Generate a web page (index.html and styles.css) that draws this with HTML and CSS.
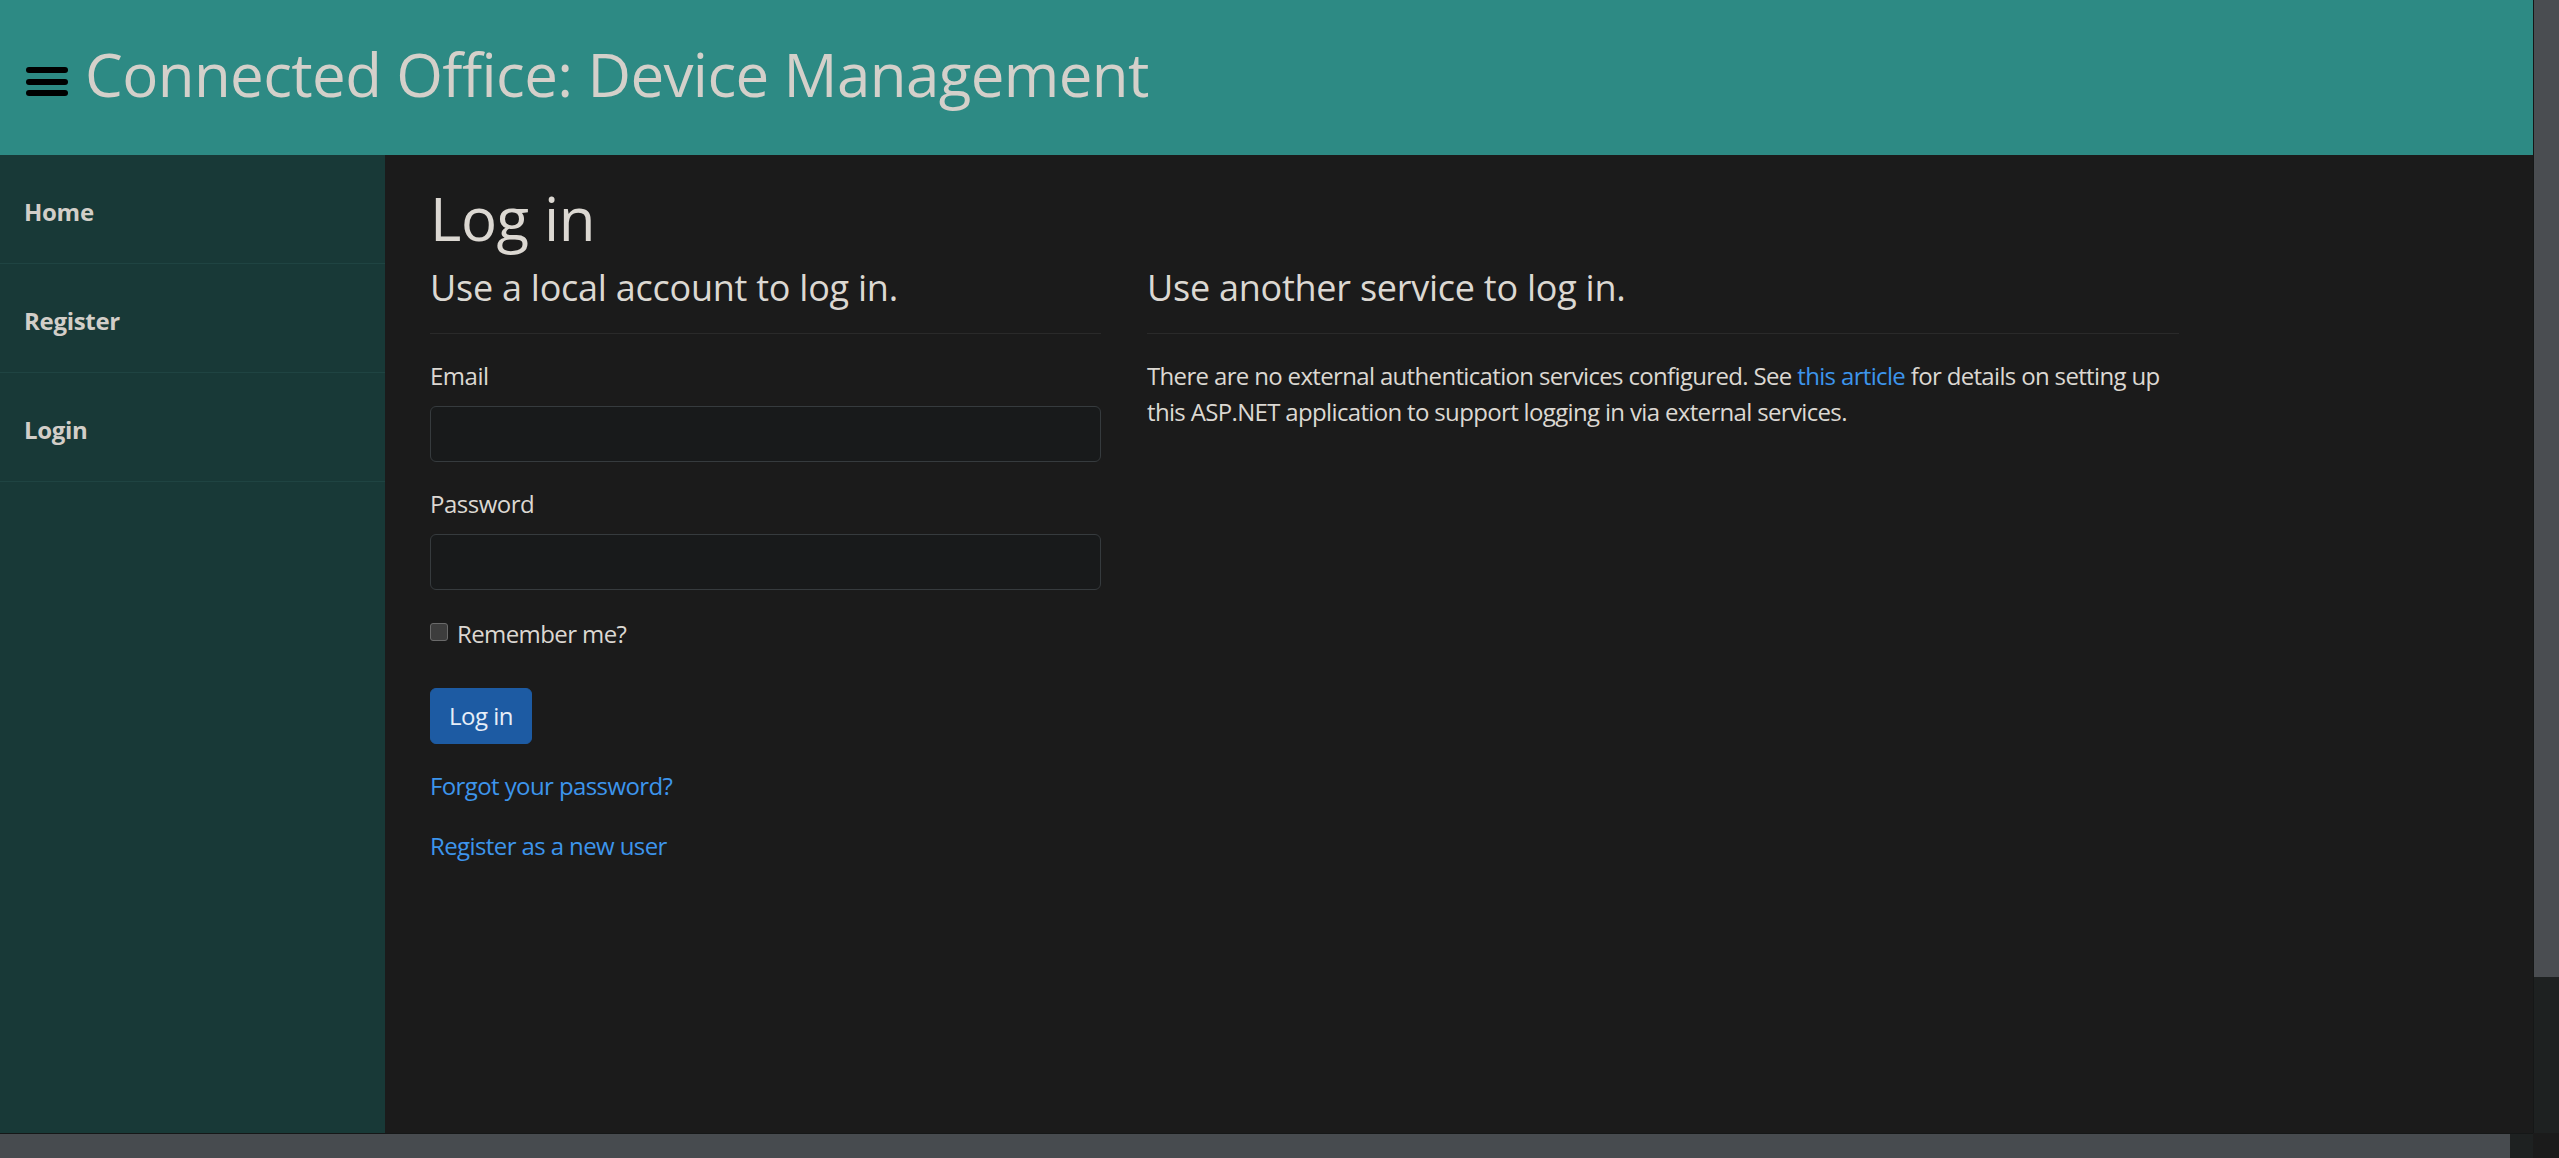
FILE: index.html
```html
<!DOCTYPE html>
<html lang="en">
<head>
<meta charset="utf-8">
<title>Log in - Connected Office: Device Management</title>
<link rel="stylesheet" href="styles.css">
</head>
<body>
<div class="viewport">
  <div class="page">
    <header class="topbar">
      <button class="menu-btn" type="button" aria-label="Toggle menu">
        <svg width="42" height="29" viewBox="0 0 42 29" aria-hidden="true">
          <line x1="3" y1="3" x2="39" y2="3" stroke="#000" stroke-width="6" stroke-linecap="round"/>
          <line x1="3" y1="15" x2="39" y2="15" stroke="#000" stroke-width="6" stroke-linecap="round"/>
          <line x1="3" y1="26" x2="39" y2="26" stroke="#000" stroke-width="6" stroke-linecap="round"/>
        </svg>
      </button>
      <span class="brand">Connected Office: Device Management</span>
    </header>
    <div class="layout">
      <nav class="sidebar">
        <a class="nav-item" href="#">Home</a>
        <a class="nav-item" href="#">Register</a>
        <a class="nav-item" href="#">Login</a>
      </nav>
      <main class="content">
        <h1 class="page-title">Log in</h1>
        <div class="row">
          <section class="col col-local">
            <form>
              <h4 class="section-title">Use a local account to log in.</h4>
              <hr class="divider">
              <div class="form-group">
                <label class="field-label" for="email">Email</label>
                <input class="form-control" id="email" type="email">
              </div>
              <div class="form-group">
                <label class="field-label" for="password">Password</label>
                <input class="form-control" id="password" type="password">
              </div>
              <div class="form-group">
                <label class="check-label"><input class="check" type="checkbox"><span>Remember me?</span></label>
              </div>
              <div class="form-group">
                <button class="btn-primary" type="button">Log in</button>
              </div>
              <div class="form-group">
                <p class="link-line"><a class="link" href="#">Forgot your password?</a></p>
                <p class="link-line"><a class="link" href="#">Register as a new user</a></p>
              </div>
            </form>
          </section>
          <section class="col col-external">
            <h4 class="section-title">Use another service to log in.</h4>
            <hr class="divider">
            <p class="info"><span>There are no external authentication services configured. See </span><a class="link" href="#">this article</a><span> for details on setting up</span><br><span>this ASP.NET application to support logging in via external services.</span></p>
          </section>
        </div>
      </main>
    </div>
  </div>
  <div class="vscroll"><div class="vthumb"></div></div>
  <div class="hscroll"><div class="hthumb"></div></div>
  <div class="corner"></div>
</div>
</body>
</html>
```
FILE: styles.css
```css
html, body {
  margin: 0;
  padding: 0;
  height: 100%;
  overflow: hidden;
}

body {
  font-family: "Open Sans", "Noto Sans", "Liberation Sans", sans-serif;
  font-size: 24px;
  line-height: 36px;
  color: #dcd8d2;
  background: #1b1b1b;
}

.viewport {
  display: grid;
  grid-template-columns: 1fr 26px;
  grid-template-rows: 1fr 25px;
  width: 100vw;
  height: 100vh;
}

.page {
  overflow: hidden;
  display: flex;
  flex-direction: column;
  background: #1b1b1b;
  min-width: 0;
  min-height: 0;
}

/* header */
.topbar {
  flex: none;
  height: 155px;
  box-sizing: border-box;
  padding: 38px 0 0 26px;
  display: flex;
  align-items: flex-start;
  background: #2d8a84;
}

.menu-btn {
  border: 0;
  padding: 0;
  margin: 29px 17px 0 0;
  background: transparent;
  display: block;
  line-height: 0;
}

.brand {
  font-size: 60px;
  line-height: 72px;
  font-weight: 500;
  color: #d4d0ca;
  letter-spacing: -0.6px;
  white-space: nowrap;
}

/* layout */
.layout {
  flex: 1;
  display: flex;
  min-height: 0;
}

.sidebar {
  flex: none;
  width: 385px;
  background: #183937;
  display: flex;
  flex-direction: column;
}

.nav-item {
  display: block;
  height: 109px;
  box-sizing: border-box;
  padding: 39px 24px 0;
  border-bottom: 1px solid #1f4442;
  font-weight: 700;
  font-size: 24px;
  line-height: 36px;
  color: #d2cec8;
  text-decoration: none;
  letter-spacing: -0.3px;
}

.content {
  flex: 1;
  padding: 27px 0 0 45px;
  min-width: 0;
}

.page-title {
  margin: 0 0 12px;
  font-size: 60px;
  line-height: 72px;
  font-weight: 500;
  color: #dcd8d2;
  letter-spacing: -0.4px;
}

.row {
  display: flex;
  gap: 46px;
}

.col-local {
  width: 671px;
  flex: none;
}

.col-external {
  width: 1032px;
  flex: none;
}

.section-title {
  margin: 0 0 12px;
  font-size: 36px;
  line-height: 43px;
  font-weight: 500;
  color: #dcd8d2;
  letter-spacing: -0.25px;
}

.divider {
  margin: 24px 0;
  border: 0;
  border-top: 1px solid #2a2a2a;
  height: 0;
}

.form-group {
  margin-bottom: 24px;
}

.field-label {
  display: inline-block;
  margin-bottom: 12px;
  letter-spacing: -0.5px;
}

.form-control {
  display: block;
  width: 100%;
  box-sizing: border-box;
  height: 56px;
  padding: 9px 18px;
  border: 1px solid #363b3e;
  border-radius: 6px;
  background: #181a1b;
  color: #dcd8d2;
  font: inherit;
}

.check-label {
  display: inline-flex;
  align-items: center;
  gap: 9px;
  margin-bottom: 12px;
  letter-spacing: -0.6px;
}

.check {
  appearance: none;
  -webkit-appearance: none;
  margin: 0 0 3px;
  width: 18px;
  height: 18px;
  box-sizing: border-box;
  border: 1px solid #6a6a6a;
  border-radius: 3px;
  background: #3d3d3d;
}

.btn-primary {
  display: inline-block;
  padding: 9px 18px;
  border: 1px solid #1d5ba3;
  border-radius: 6px;
  background: #1d5ba3;
  color: #e6eef8;
  font: inherit;
  letter-spacing: -0.5px;
}

.link-line {
  margin: 0 0 24px;
  letter-spacing: -0.6px;
}

.link {
  color: #3d95ec;
  text-decoration: none;
}

.info {
  margin: 0;
  letter-spacing: -0.66px;
}

/* fake scrollbars */
.vscroll {
  background: #1e2121;
  border-left: 1px solid #151717;
}

.vthumb {
  height: 977px;
  background: #4a4d51;
}

.hscroll {
  background: #1e2121;
  border-top: 1px solid #151717;
}

.hthumb {
  width: 2510px;
  height: 100%;
  background: #474b4f;
}

.corner {
  background: #1b1b1b;
}
```
